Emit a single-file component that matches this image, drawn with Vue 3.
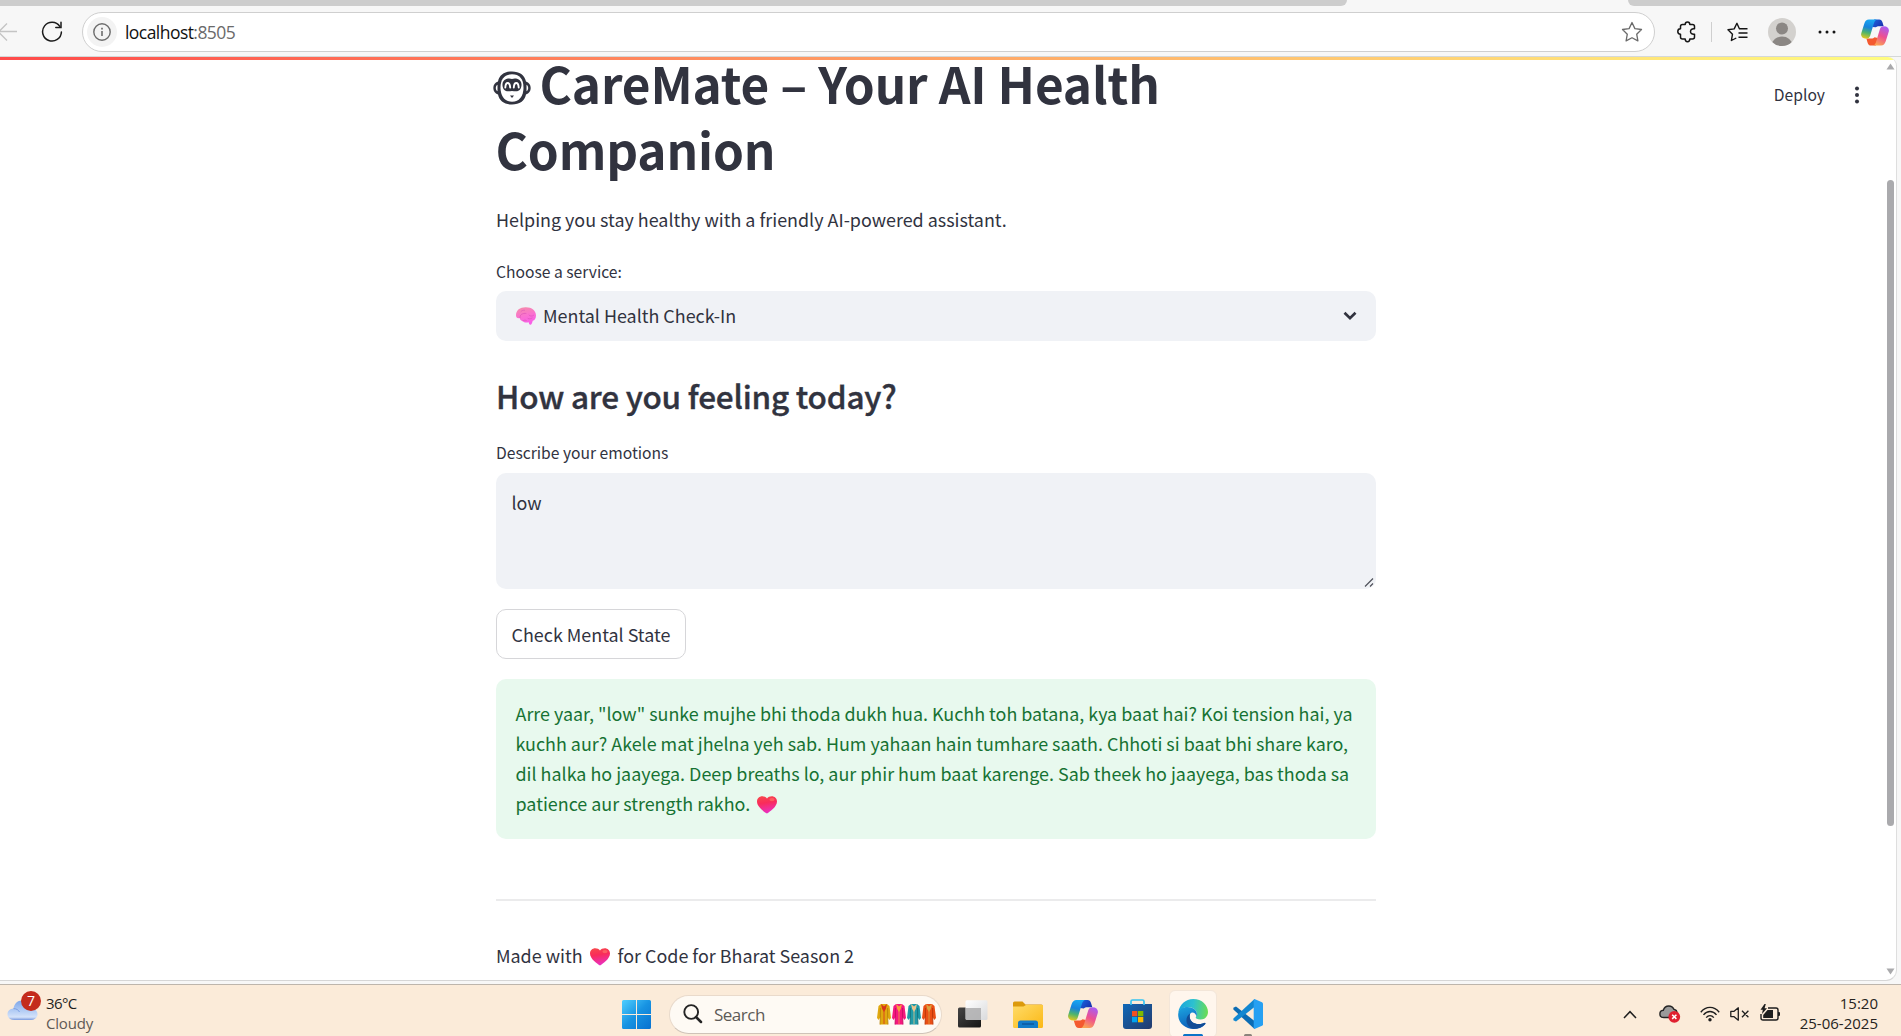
<script setup>
const costumes = [
  { body: '#e0a80f', dark: '#b98208', trim: '#d8341c' },
  { body: '#f5177f', dark: '#c40d62', trim: '#f5a03c' },
  { body: '#1f9aa8', dark: '#14707c', trim: '#e9c48c' },
  { body: '#ea4f16', dark: '#b93408', trim: '#d9a441' },
]
</script>

<template>
  <div class="screen">
    <svg class="defs" width="0" height="0" aria-hidden="true">
      <defs>
        <linearGradient id="heartFill" x1="0.2" y1="0" x2="0.4" y2="1">
          <stop offset="0" stop-color="#f8484c" /><stop offset="0.4" stop-color="#f92c5a" /><stop offset="1" stop-color="#ea30c4" />
        </linearGradient>
        <linearGradient id="brainFill" x1="0" y1="0" x2="0.3" y2="1">
          <stop offset="0" stop-color="#f58fa6" /><stop offset="0.6" stop-color="#fa70d2" /><stop offset="1" stop-color="#f95fe6" />
        </linearGradient>
        <linearGradient id="copA" x1="0.5" y1="0" x2="0.3" y2="1">
          <stop offset="0" stop-color="#18a6f2" /><stop offset="0.4" stop-color="#1783dc" /><stop offset="0.7" stop-color="#4fb56b" /><stop offset="1" stop-color="#e6c61b" />
        </linearGradient>
        <linearGradient id="copB" x1="0.7" y1="0" x2="0.3" y2="1">
          <stop offset="0" stop-color="#a95cf2" /><stop offset="0.5" stop-color="#ee5090" /><stop offset="1" stop-color="#fba452" />
        </linearGradient>
        <linearGradient id="copC" x1="0" y1="0" x2="1" y2="0.6">
          <stop offset="0" stop-color="#1b68e0" /><stop offset="1" stop-color="#1a33b0" />
        </linearGradient>
        <symbol id="heart" viewBox="0 0 20 18">
          <path d="M10 17.600C7 15.600 0 11 0 5.600 0 2.400 2.400.3 5.200.3 7.300.3 9 1.200 10 2.400 11 1.200 12.700.3 14.800.3 17.600.3 20 2.400 20 5.600 20 11 13 15.600 10 17.600Z" fill="url(#heartFill)" />
          <ellipse cx="15" cy="3.600" rx="2.600" ry="1.600" fill="#ff7a6b" opacity=".6" />
        </symbol>
        <symbol id="copilot" viewBox="0 0 30 28">
          <path d="M14 0h5.500c2 0 2.900 1.200 3.500 3l1.300 4.300h-4.500c-2.300 0-3.200.4-4 1.200L12 8Z" fill="url(#copC)" />
          <path d="M16 28h-5c-2.500 0-3.400-1.500-4-3.400L5.800 20.500h4.700c2.300 0 3.300-.5 4-1.300L18 20Z" fill="#f4592f" />
          <path d="M8.500 0h8.300c-1.600.8-2.400 2.300-3 4.200L9.800 17.500c-.8 2.300-2 3.100-4.300 3.100C1.400 20.600-.6 18 .3 14.800L3.500 4.500C4.500 1.500 6 0 8.500 0Z" fill="url(#copA)" />
          <path d="M21.500 28h-8.300c1.600-.8 2.400-2.300 3-4.200l4-13.300c.8-2.300 2-3.200 4.300-3.200 4.100 0 6.100 2.700 5.200 5.900l-3.200 10.300c-1 3-2.500 4.500-5 4.500Z" fill="url(#copB)" />
        </symbol>
      </defs>
    </svg>

    <div class="tabs"><div class="tab-left"></div><div class="tab-right"></div></div>

    <div class="toolbar">
      <svg class="back" width="17" height="20" viewBox="0 0 17 20" fill="none" stroke="#c4c4c4" stroke-width="1.300"><path d="M7 1.500-1.500 10 7 18.500M-1 9.500H17" /></svg>
      <svg class="reload" width="22" height="22" viewBox="0 0 22 22" fill="none" stroke="#1b1b1b" stroke-width="1.500" stroke-linecap="round"><path d="M18.800 5.400A9.400 9.400 0 1 0 20.400 11" /><path d="M20 1.200v5.200h-5.200" /></svg>
      <div class="address">
        <div class="info">
          <svg width="18" height="18" viewBox="0 0 18 18" fill="none" stroke="#6c6c6c" stroke-width="1.400"><circle cx="9" cy="9" r="8.200" /><path d="M9 8v5" stroke-width="1.600" /><path d="M9 4.800v1.700" stroke-width="1.700" /></svg>
        </div>
        <span class="url">localhost<span>:8505</span></span>
        <svg class="star" width="22" height="22" viewBox="0 0 22 22" fill="none" stroke="#6a6a6a" stroke-width="1.300" stroke-linejoin="round"><path d="M11 1.500l2.900 6.100 6.600.9-4.800 4.700 1.200 6.700L11 16.700 5.100 19.900l1.200-6.700L1.500 8.500l6.600-.9Z" /></svg>
      </div>
      <svg class="puzzle" width="20" height="22" viewBox="0 0 20 22" fill="none" stroke="#151515" stroke-width="1.500" stroke-linejoin="round"><path d="M5.500 3.500h2.700c0-1.600.8-2.500 2.300-2.500s2.300.9 2.300 2.500h2.700q2 0 2 2v2.300c-2.700-.3-4 .9-4 2.700s1.300 3 4 2.700v2.800q0 2-2 2h-2.700c0 1.800-.8 2.700-2.300 2.700s-2.300-.9-2.300-2.700H5.500q-2 0-2-2v-2.800C1.800 13.200.8 12.200.8 10.500s1-2.700 2.700-2.700V5.500q0-2 2-2Z" /></svg>
      <div class="divider"></div>
      <svg class="favs" width="21" height="20" viewBox="0 0 21 20" fill="none" stroke="#151515" stroke-width="1.400" stroke-linejoin="round"><path d="M14 6.700h-1.600L9.900 1.300 7.200 6.900l-6.200.9 4.500 4.400-1.100 6.300 4.900-2.500M12 6.700h8.500M11.500 11h9M11.500 15.300h9" /></svg>
      <svg class="avatar" width="28" height="28" viewBox="0 0 28 28"><clipPath id="av"><circle cx="14" cy="14" r="14" /></clipPath><g clip-path="url(#av)"><path fill="#d3d1ce" d="M0 0h28v28H0z" /><circle cx="14" cy="10.500" r="6" fill="#8b8784" /><ellipse cx="14" cy="27" rx="10.200" ry="8.500" fill="#8b8784" /></g></svg>
      <svg class="more" width="18" height="4" viewBox="0 0 18 4" fill="#151515"><circle cx="2" cy="2" r="1.500" /><circle cx="9" cy="2" r="1.500" /><circle cx="16" cy="2" r="1.500" /></svg>
      <svg class="cop" width="28" height="27"><use href="#copilot" /></svg>
    </div>

    <div class="frame">
      <div class="page">
        <div class="rainbow"></div>
        <div class="deploy">
          <span>Deploy</span>
          <svg width="6" height="18" viewBox="0 0 6 18" fill="#31333f"><circle cx="3" cy="2.500" r="2" /><circle cx="3" cy="9" r="2" /><circle cx="3" cy="15.400" r="2" /></svg>
        </div>
        <div class="scrollbar">
          <svg width="9" height="7" viewBox="0 0 9 7"><path d="M4.500.5 8.500 6.500h-8Z" fill="#a9a9ac" /></svg>
          <div class="thumb"></div>
          <svg class="down" width="9" height="7" viewBox="0 0 9 7"><path d="M4.500 6.500.5.500h8Z" fill="#a9a9ac" /></svg>
        </div>
        <main class="content">
          <h1>
            <svg class="face" width="38" height="34" viewBox="0 0 38 34" fill="none">
              <path d="M19 .5C11.500.5 6.300 4 5 10.500 2 11.500.3 14 .3 17S2 22.500 5 23.500c1.300 6.500 6.500 10 14 10s12.700-3.500 14-10c3-1 4.700-3.500 4.700-6.500S36 11.500 33 10.500C31.700 4 26.500.5 19 .5Z" fill="#31333f" />
              <path d="M19 3.300C11.500 3.300 7.500 8 7.500 16.500S11.500 30.700 19 30.700s11.500-5.700 11.500-14.200S26.500 3.300 19 3.300Z" fill="#fff" />
              <path d="M2.800 17c0-1.500.7-2.600 1.700-3.200v6.400c-1-.6-1.700-1.700-1.700-3.200ZM35.200 17c0-1.500-.7-2.600-1.700-3.200v6.400c1-.6 1.700-1.700 1.700-3.200Z" fill="#fff" />
              <path d="M19 8c-3-1.200-9-.5-9.500 5-.3 3.500 1.500 7 4.500 7.300 1.800.2 3.500-.2 5-.2s3.200.4 5 .2c3-.3 4.800-3.800 4.500-7.300-.5-5.500-6.500-6.200-9.500-5Z" fill="#31333f" />
              <path d="M12.300 16.500c.4-6 4.400-6 4.900 0M20.800 16.500c.4-6 4.500-6 4.900 0" stroke="#fff" stroke-width="1.900" stroke-linecap="round" />
              <path d="M17 24.500h4l-2 2.500Z" fill="#31333f" />
            </svg><span>CareMate – Your AI Health</span><br>Companion
          </h1>
          <p class="lead">Helping you stay healthy with a friendly AI-powered assistant.</p>
          <label class="label service">Choose a service:</label>
          <div class="select">
            <svg class="brain" width="20" height="18" viewBox="0 0 20 18"><path d="M0 8.500C0 3 4 .3 9.500.2 15.500 0 20 3.500 20 8.500c0 3-1.300 4.800-3.300 5.300-.3 1.500-1 3.800-2 4-1.500.2-1.800-1.600-2-2.600-2.500.8-4.700.5-6-1.200C5 13.700 3.800 12.600 3.600 11 1.500 11.500 0 10.500 0 8.500Z" fill="url(#brainFill)" /><path d="M4 10.700C3.500 7.500 7 5.800 10 6.500M6.800 13.800c1.200-.5 2-.8 3.400-.4M13 8c1 1.500 3 1.400 4.500.4M12 11.500c1.500.8 3 .5 4-.5M5 4.500c1-1 2-1.400 3.500-1.300" fill="none" stroke="#dc56b9" stroke-width=".7" stroke-linecap="round" /></svg>
            <span>Mental Health Check-In</span>
            <svg class="chev" width="14" height="10" viewBox="0 0 14 10" fill="none" stroke="#31333f" stroke-width="2.700"><path d="M1.500 1.800 7 7.200l5.500-5.400" /></svg>
          </div>
          <h2>How are you feeling today?</h2>
          <label class="label">Describe your emotions</label>
          <div class="textarea">
            <span>low</span>
            <svg class="grip" width="10" height="10" viewBox="0 0 10 10" stroke="#50525c" stroke-width="1.200"><path d="M1 9.500 9 1.500M6 9.500 9 6.500" /></svg>
          </div>
          <button class="check">Check Mental State</button>
          <div class="alert">
            Arre yaar, "low" sunke mujhe bhi thoda dukh hua. Kuchh toh batana, kya baat hai? Koi tension hai, ya<br>
            kuchh aur? Akele mat jhelna yeh sab. Hum yahaan hain tumhare saath. Chhoti si baat bhi share karo,<br>
            dil halka ho jaayega. Deep breaths lo, aur phir hum baat karenge. Sab theek ho jaayega, bas thoda sa<br>
            patience aur strength rakho. <svg class="heart" width="20" height="18"><use href="#heart" /></svg>
          </div>
          <div class="rule"></div>
          <p class="foot">Made with <svg class="heart" width="20" height="18"><use href="#heart" /></svg> for Code for Bharat Season 2</p>
        </main>
      </div>
    </div>

    <div class="taskbar">
      <div class="bar">
        <div class="weather">
          <div class="cloud-box">
            <svg width="38" height="34" viewBox="0 0 38 34">
              <defs><linearGradient id="cl" x1="0" y1="0" x2="0" y2="1"><stop offset="0" stop-color="#7ea6e8" /><stop offset=".55" stop-color="#b5cef5" /><stop offset=".85" stop-color="#d5e3fa" /><stop offset="1" stop-color="#7899de" /></linearGradient></defs>
              <path d="M7.500 30C3 30 .5 27.500.5 24.300s2.500-5.500 6-5.700C7 14 10.500 10.500 15 10.500c5 0 8.500 3.500 9 8 4 0 6.500 2.500 6.500 5.700S28 30 24 30Z" fill="url(#cl)" />
              <path d="M6.500 18.600c3 0 5 1.400 6 3.400" stroke="#7b9fe4" fill="none" />
            </svg>
            <span class="badge">7</span>
          </div>
          <div class="wtext"><div class="deg">36°C</div><div class="cloudy">Cloudy</div></div>
        </div>

        <svg class="win" width="29" height="29" viewBox="0 0 29 29"><defs><linearGradient id="wg" x1="0" y1="0" x2="29" y2="29" gradientUnits="userSpaceOnUse"><stop offset="0" stop-color="#50cfff" /><stop offset=".5" stop-color="#1793e2" /><stop offset="1" stop-color="#0871d0" /></linearGradient></defs><path d="M1.500 0H14v14H0V1.500Q0 0 1.500 0ZM15 0h12.500Q29 0 29 1.500V14H15ZM0 15h14v14H1.500Q0 29 0 27.500ZM15 15h14v12.500q0 1.500-1.500 1.500H15Z" fill="url(#wg)" /></svg>
        <div class="search">
          <svg width="20" height="20" viewBox="0 0 20 20" fill="none" stroke="#242424"><circle cx="8.200" cy="8" r="6.900" stroke-width="1.900" /><path d="M13 13l5 5" stroke-width="2.500" stroke-linecap="round" /></svg>
          <span>Search</span>
          <div class="costumes">
            <svg v-for="(c, i) in costumes" :key="i" width="14" height="22" viewBox="0 0 14 22">
              <path d="M4 1h6l2.500 2L14 15l-1.800 2L10.600 14l.4 7.500H3L3.400 14 1.800 17 0 15 1.500 3Z" :fill="c.body" />
              <path d="M3.400 5v9L3 21.500M10.600 5v9l.4 7.500" :stroke="c.dark" fill="none" stroke-width=".9" />
              <path d="M4 1 7 3.500 10 1 8.800 6 7 9 5.200 6Z" :fill="c.trim" /><path d="M7 8v13" :stroke="c.trim" stroke-width=".8" />
            </svg>
          </div>
        </div>
        <svg class="tview" width="30" height="28" viewBox="0 0 30 28"><defs><linearGradient id="tv1" x1="0" y1="0" x2="1" y2="1"><stop offset="0" stop-color="#444" /><stop offset="1" stop-color="#151515" /></linearGradient><linearGradient id="tv2" x1="0" y1="0" x2="1" y2="1"><stop offset="0" stop-color="#fff" /><stop offset="1" stop-color="#d9dadc" /></linearGradient></defs><rect y="7.500" width="23" height="20" rx="1.500" fill="url(#tv1)" /><rect x="7.500" y=".3" width="22" height="19.700" rx="1.500" fill="url(#tv2)" /><path d="M8 8h15v12H8z" fill="#a9a9aa" opacity=".8" /></svg>
        <svg class="folder" width="30" height="27" viewBox="0 0 30 27"><defs><linearGradient id="fo" x1="0" y1="0" x2="1" y2="1"><stop offset="0" stop-color="#ffdb68" /><stop offset="1" stop-color="#fbb815" /></linearGradient></defs><path d="M0 2Q0 .5 1.500.5H9.500L12.500 3.500H28.500Q30 3.500 30 5v4H0Z" fill="#dc9a0c" /><path d="M0 5.500H10.500L13 4H30V25.500Q30 27 28.500 27H1.500Q0 27 0 25.500Z" fill="url(#fo)" /><path d="M5 27V22Q5 19.500 7.500 19.500h15Q25 19.500 25 22v5Z" fill="#137bc9" /><path d="M9 23h12" stroke="#0a4f96" stroke-width="1.200" /></svg>
        <svg class="copt" width="30" height="28"><use href="#copilot" /></svg>
        <svg class="store" width="29" height="30" viewBox="0 0 29 30"><defs><linearGradient id="st" x1="0" y1="0" x2="1" y2="1"><stop offset="0" stop-color="#0f68b8" /><stop offset="1" stop-color="#243a6b" /></linearGradient></defs><path d="M0 5h29v22q0 3-3 3H3q-3 0-3-3Z" fill="url(#st)" /><path d="M8 6V2.500Q8 1 9.500 1h10Q21 1 21 2.500V6" fill="none" stroke="#35c3f2" stroke-width="1.700" /><path d="M9 12h5.300v5.300H9z" fill="#f25022" /><path d="M15 12h5.300v5.300H15z" fill="#7fba00" /><path d="M9 18h5.300v5.300H9z" fill="#00a4ef" /><path d="M15 18h5.300v5.300H15z" fill="#ffb900" /></svg>
        <div class="tile">
          <svg width="30" height="30" viewBox="0 0 30 30">
            <defs>
              <linearGradient id="e1" x1="0" y1=".3" x2="1" y2=".4"><stop offset="0" stop-color="#1aa4dd" /><stop offset=".5" stop-color="#2dc1cf" /><stop offset="1" stop-color="#69dc55" /></linearGradient>
              <linearGradient id="e2" x1="0" y1="0" x2=".4" y2="1"><stop offset="0" stop-color="#1da6e0" /><stop offset="1" stop-color="#0b5cb8" /></linearGradient>
            </defs>
            <path d="M.3 13.500C1.500 5.500 7.500 0 15.300 0 24 0 30 6.300 30 13c0 4.500-3.300 7.600-7.500 7.600-3.300 0-4.800-1.200-4.800-2 0-.9 1.200-1.200 1.200-3.600C18.900 11 15 8 10 8 5.500 8 2 10.500.3 13.500Z" fill="url(#e1)" />
            <path d="M.2 15C.5 10.500 4.500 8 9.500 8c5.300 0 9.400 3.200 9.400 7 0 1-.3 1.900-.6 2.400-.3-2.400-2-3.800-4-3.800-1.500 0-2.600 1.600-2.600 4 0 5 4.500 7.500 8.800 7.500 3.500 0 5.500-1.300 6.500-1.200.8.100.5 1 0 1.600C24.500 28.500 20 30 15.500 30 7 30-.3 23.500.2 15Z" fill="url(#e2)" />
            <path d="M12 14.500c-2.200 1.500-3.600 4-3.600 6.800 0 3.700 2.600 7.200 6.600 8.500 5 .3 9.500-2 12-4.500.6-.7.700-1.600-.2-1.600-1 0-2.800 1.400-6.300 1.400-4.300 0-8.800-2.500-8.800-7.500 0-1.200.1-2.200.3-3.100Z" fill="#124c96" />
          </svg>
          <i></i>
        </div>
        <div class="code">
          <svg width="30" height="30" viewBox="0 0 30 30"><path d="M21.500 22 3 7.400.4 8.800v1.700L21.500 30Z" fill="#0b6bb3" /><path d="M21.500 8 3 22.600.4 21.200v-1.700L21.500 0Z" fill="#1287d1" /><path d="M21.500 0 29 3.200q1 .5 1 1.500v20.600q0 1-1 1.500L21.500 30q-.8-.3-.8-1.500v-27Q20.700.3 21.500 0Z" fill="#26a0f2" /></svg>
          <i></i>
        </div>

        <svg class="up" width="14" height="9" viewBox="0 0 14 9" fill="none" stroke="#1e1e1e" stroke-width="1.500"><path d="M1 8l6-6.300L13 8" /></svg>
        <svg class="onedrive" width="22" height="18" viewBox="0 0 22 18"><path d="M4.800 12.500C2.500 12.500.9 11 .9 8.900S2.400 5.500 4.300 5.300C5 2.800 7 1 9.800 1c2.500 0 4.300 1.300 5.200 3.400 1.800.3 3 1.600 3 3.600v4.500Z" fill="#9a9a9a" stroke="#252525" stroke-width="1.400" /><circle cx="15.300" cy="11.800" r="5.900" fill="#e02030" /><path d="M13.200 9.700l4.200 4.200m0-4.200-4.200 4.200" stroke="#fff" stroke-width="1.500" /></svg>
        <svg class="wifi" width="20" height="16" viewBox="0 0 20 16" fill="none" stroke="#1e1e1e" stroke-width="1.400"><path d="M.8 6.200C6-.2 14-.2 19.200 6.200M3.500 8.900C7.200 4.400 12.800 4.400 16.500 8.900M6.200 11.600c2.200-2.600 5.400-2.600 7.600 0" /><circle cx="10" cy="13.800" r="1.700" fill="#1e1e1e" stroke="none" /></svg>
        <svg class="mute" width="20" height="14" viewBox="0 0 20 14" fill="none" stroke="#1e1e1e" stroke-width="1.300" stroke-linejoin="round"><path d="M.8 4.400h3L8.300.8v12.400L3.800 9.600h-3ZM12 3.800l6.400 6.400m0-6.400L12 10.200" /></svg>
        <svg class="batt" width="21" height="17" viewBox="0 0 21 17"><path d="M8 4h8q2 0 2 2v8q0 2-2 2H3q-2 0-2-2V10" fill="none" stroke="#1e1e1e" stroke-width="1.400" /><path d="M18 8h1q1 0 1 1v2q0 1-1 1h-1Z" fill="#1e1e1e" /><path d="M7.500 6H13v8H3.200V11Z" fill="#1e1e1e" /><path d="M4.500 0 .5 5.800h2.300L2 10l5-5.800H4.600L5.800 0Z" fill="#1e1e1e" /></svg>
        <div class="clock"><div>15:20</div><div>25-06-2025</div></div>
      </div>
    </div>
  </div>
</template>

<style>
html, body { margin: 0; overflow: hidden; }
</style>

<style scoped>
* { box-sizing: border-box; }
svg { display: block; flex: none; }
.defs { position: absolute; }
.screen { width: 1901px; height: 1036px; display: flex; flex-direction: column; overflow: hidden; background: #f7f7f7; font-family: "Noto Sans CJK SC", "Noto Sans", sans-serif; }
.tabs { height: 6px; display: flex; justify-content: space-between; flex: none; background: #f7f7f7; }
.tab-left { width: 1347px; background: #cdcdcd; border-bottom-right-radius: 8px; }
.tab-right { width: 273px; background: #cdcdcd; border-bottom-left-radius: 8px; }
.toolbar { height: 51px; padding-top: 2px; flex: none; display: flex; align-items: center; border-bottom: 1px solid #d5d8d8; }
.reload { margin-left: 24px; }
.address { margin-left: 19px; width: 1573px; height: 40px; border: 1px solid #cfcfcf; border-radius: 20px; background: #fff; display: flex; align-items: center; }
.info { width: 30px; height: 30px; margin-left: 4px; border-radius: 50%; background: #f3f3f3; display: flex; align-items: center; justify-content: center; }
.url { margin-left: 8px; flex: 1; font: 17.500px/24px "Open Sans", sans-serif; letter-spacing: -.55px; color: #111; }
.url span { color: #6a6a6a; }
.star { margin-right: 11px; }
.puzzle { margin-left: 22px; }
.divider { width: 1px; height: 20px; background: #cfcfcf; margin-left: 14px; }
.favs { margin-left: 15px; }
.avatar { margin-left: 20px; }
.more { margin-left: 22px; }
.cop { margin-left: 25px; }
.frame { height: 927px; flex: none; padding-right: 4px; padding-bottom: 3px; }
.page { position: relative; width: 1897px; height: 924px; overflow: hidden; background: #fff; border-right: 1px solid #dedede; border-bottom: 1px solid #d6d6d6; border-radius: 0 9px 11px 0; color: #31333f; }
.rainbow { height: 3px; background: linear-gradient(90deg, #ff4b4b, #fffd80); position: absolute; inset: 0 0 auto 0; z-index: 2; }
.deploy { position: absolute; top: 26px; right: 36px; display: flex; align-items: center; gap: 29px; font-size: 15.650px; line-height: 24px; }
.scrollbar { position: absolute; top: 6px; right: 1px; width: 9px; height: 912px; display: flex; flex-direction: column; align-items: center; }
.thumb { width: 7px; height: 646px; margin-top: 110px; border-radius: 4px; background: #aaaaad; }
.down { margin-top: auto; }
.content { width: 880px; margin: -6.600px 0 0 496px; font-size: 17.920px; }
h1 { margin: 0 0 0 -.5px; font-size: 49.500px; line-height: 66px; font-weight: 700; letter-spacing: -.13px; white-space: nowrap; }
.face { display: inline-block; vertical-align: -1px; margin: 0 9px 0 -3px; }
.lead { margin: 21.600px 0 0; line-height: 30px; }
.label { display: block; margin-top: 25.100px; font-size: 15.650px; line-height: 24px; }
.service { margin-top: 26.200px; }
.select { margin-top: 7.200px; height: 50px; border-radius: 10px; background: #f0f2f6; display: flex; align-items: center; padding: 0 19px 0 20px; }
.select span { margin: -2px 0 0 7px; flex: 1; line-height: 30px; }
h2 { margin: 33px 0 0; font-size: 31.500px; line-height: 42px; font-weight: 500; letter-spacing: -.2px; -webkit-text-stroke: .4px #31333f; }
.textarea { margin-top: 8px; height: 116px; border-radius: 10px; background: #f0f2f6; padding: 13.500px 15.500px; line-height: 30px; position: relative; }
.grip { position: absolute; right: 2px; bottom: 2px; }
.check { display: block; margin-top: 20px; width: 190px; height: 50px; border: 1px solid #d6d6d9; border-radius: 10px; background: #fff; font: inherit; color: inherit; padding: 0; text-align: center; line-height: 47px; }
.alert { margin-top: 20px; height: 160px; padding: 19px 19.500px; border-radius: 10px; background: #e8f9ee; color: #177233; line-height: 30px; white-space: nowrap; }
.heart { display: inline-block; vertical-align: -2.500px; margin: 0 3px; }
.rule { margin-top: 60px; height: 2px; background: #ebebec; }
.foot { margin: 39px 0 0; line-height: 30px; }
.foot .heart { margin-right: 4px; }
.taskbar { height: 52px; flex: none; background: #fbebd9; border-top: 1px solid #bdb5ac; overflow: hidden; font-family: "Open Sans", sans-serif; }
.bar { height: 58px; display: flex; align-items: center; }
.weather { display: flex; width: 115px; height: 51px; align-self: flex-start; }
.cloud-box { position: relative; margin: 5px 0 0 7px; }
.badge { position: absolute; left: 14px; top: 1px; width: 20px; height: 20px; border-radius: 50%; background: #c42b1c; color: #fff; font-size: 14px; line-height: 20px; text-align: center; }
.wtext { margin: 7.500px 0 0 1px; font-size: 15px; line-height: 20px; color: #1e1e1e; }
.deg { letter-spacing: -.6px; }
.cloudy { color: #5f5a55; letter-spacing: -.2px; }
.win { margin-left: 507px; }
.search { margin-left: 18px; width: 273px; height: 39px; border-radius: 20px; background: #fefaf4; border: 1px solid #e9dacb; border-bottom-color: #cfc3b8; display: flex; align-items: center; padding: 0 5px 0 13px; }
.search > span { margin-left: 11px; font-size: 17px; letter-spacing: -.5px; color: #5d5a57; flex: 1; }
.costumes { display: flex; gap: 1px; }
.tview { margin-left: 16px; }
.folder { margin-left: 25px; }
.copt { margin-left: 25px; }
.store { margin-left: 25px; }
.tile { margin-left: 17px; width: 48px; height: 48px; border-radius: 6px; background: #fff6ed; border: 1px solid #f3e6d9; display: flex; justify-content: center; align-items: center; position: relative; }
.tile i { position: absolute; bottom: 0; width: 20px; height: 3px; border-radius: 2px; background: #0b74c8; }
.code { margin-left: 16px; height: 48px; display: flex; justify-content: center; align-items: center; position: relative; }
.code i { position: absolute; bottom: 1px; width: 8px; height: 3px; border-radius: 2px; background: #8b837c; }
.up { margin-left: 360px; }
.onedrive { margin-left: 22px; }
.wifi { margin-left: 19px; }
.mute { margin-left: 10px; }
.batt { margin-left: 10px; margin-top: -4px; }
.clock { margin: 7.500px 23px 0 auto; align-self: flex-start; text-align: right; font-size: 15px; line-height: 20px; color: #262320; }
</style>
